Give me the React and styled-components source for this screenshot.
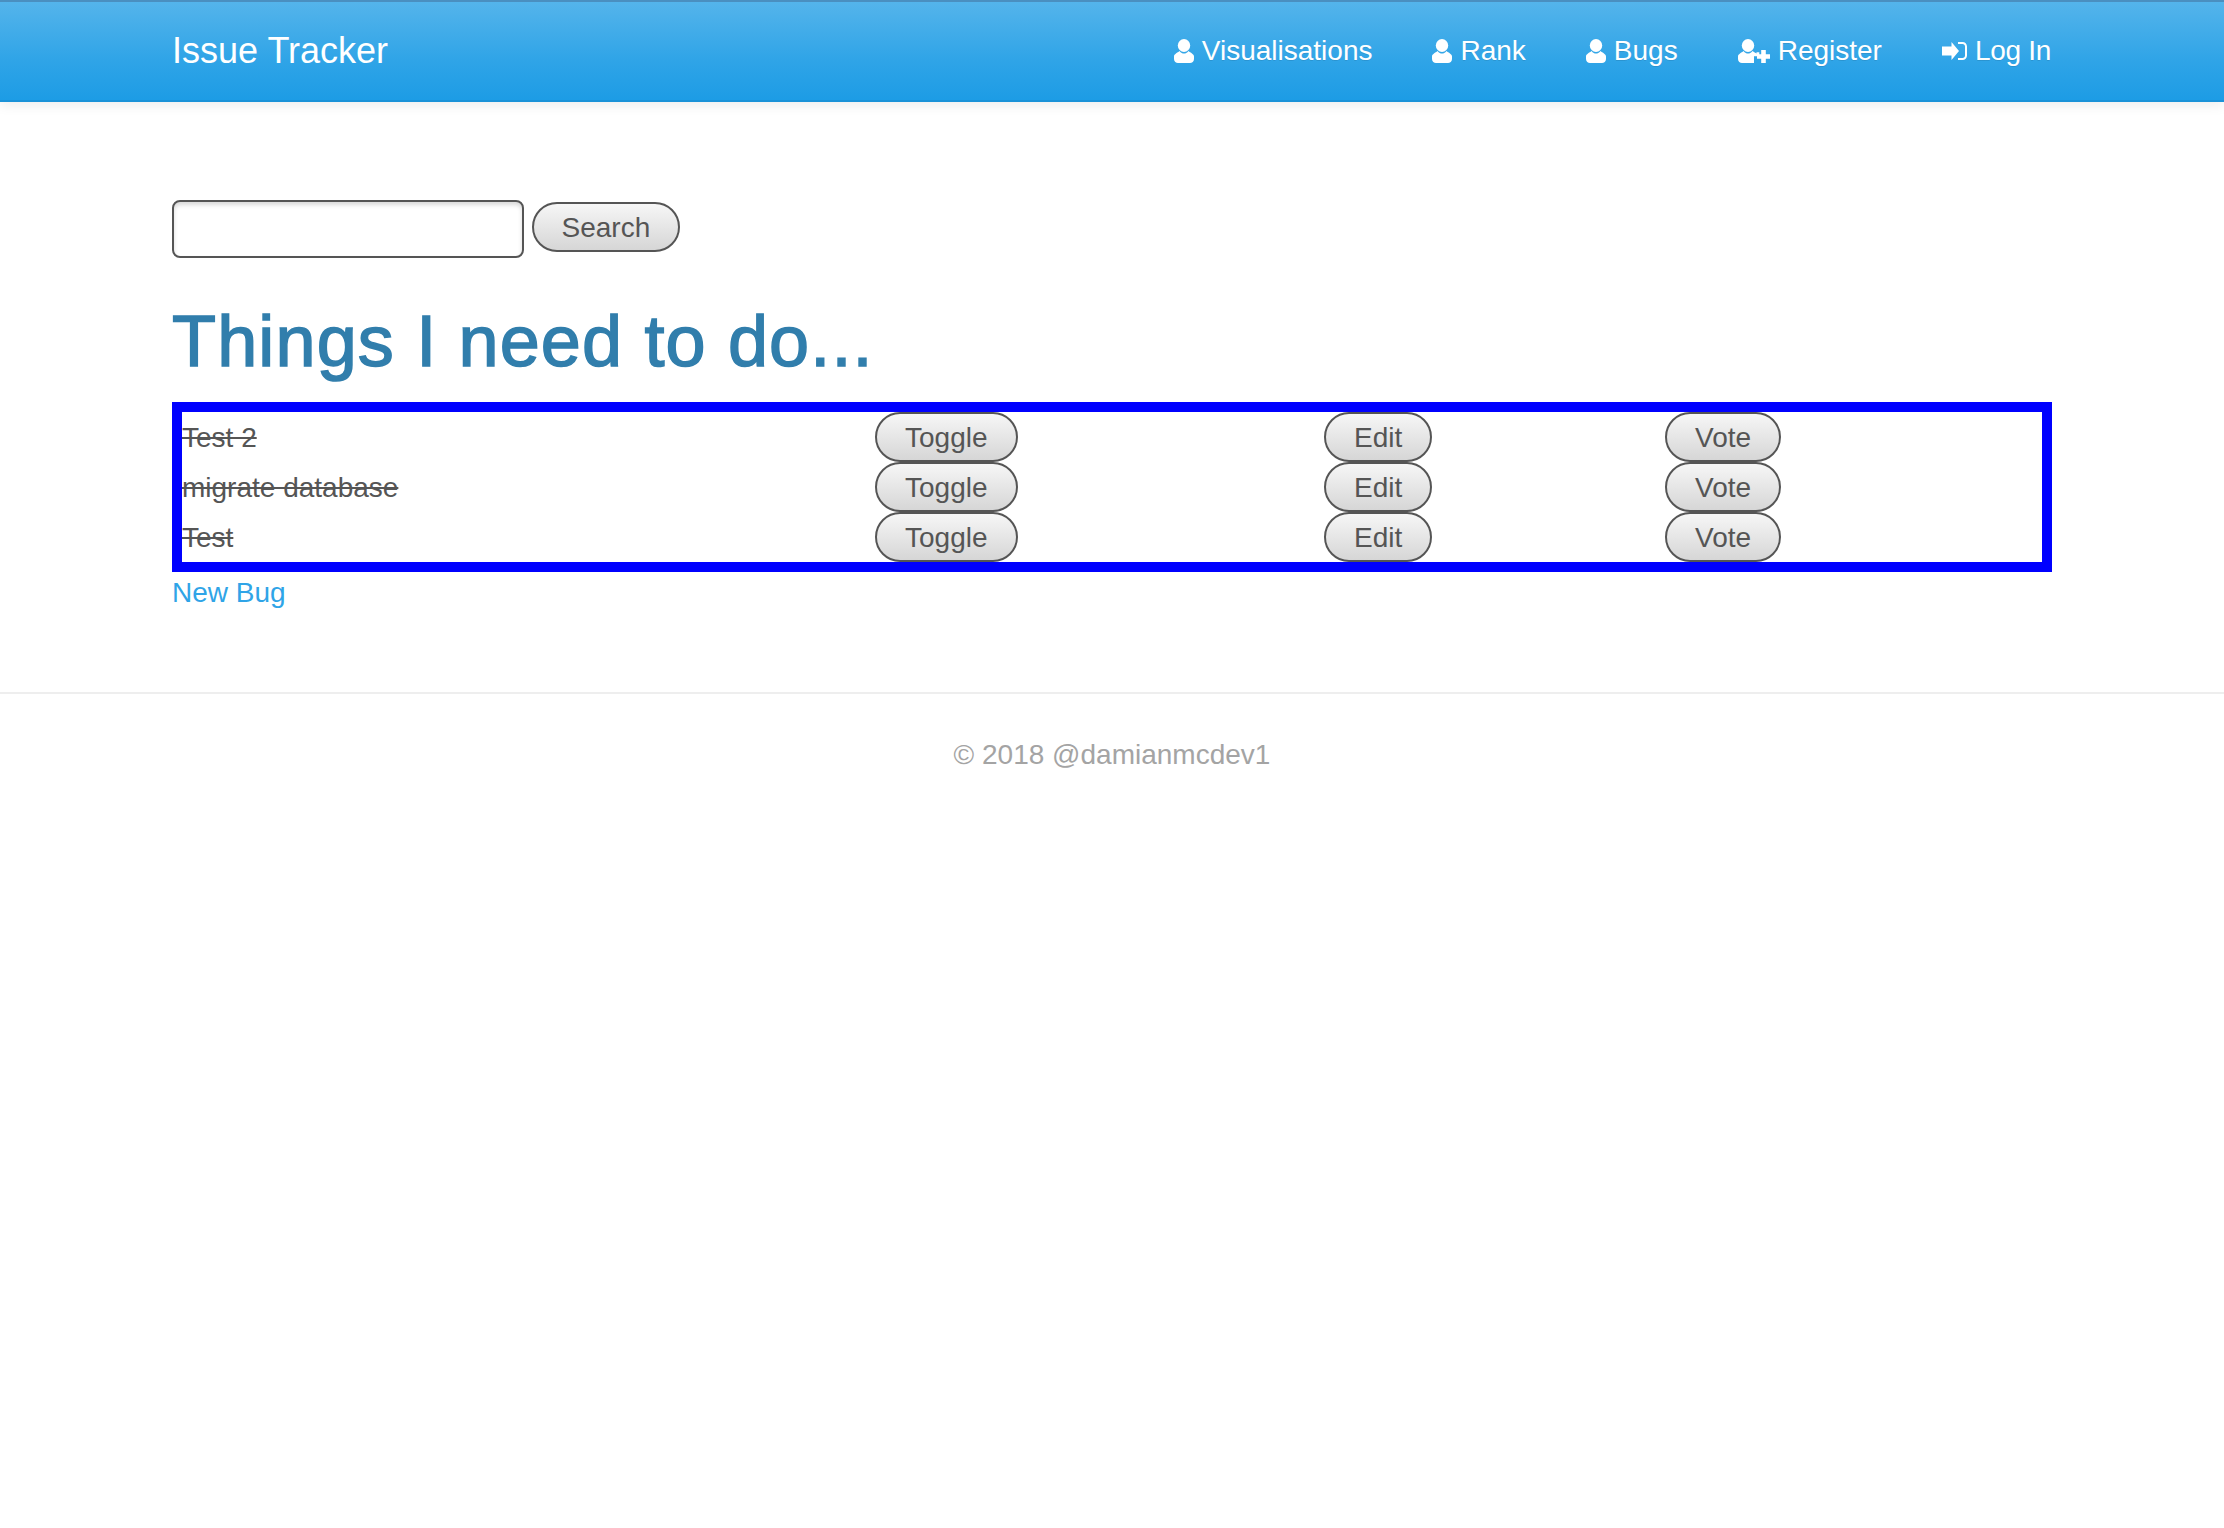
import styled, { createGlobalStyle } from "styled-components";

const bugs = ["Test 2", "migrate database", "Test"];

const GlobalStyle = createGlobalStyle`
  html, body {
    margin: 0;
    background: #fff;
    font-family: "Liberation Sans", Arial, sans-serif;
    font-size: 28px;
    line-height: 40px;
    color: #555;
  }
`;

const Navbar = styled.header`
  height: 102px;
  box-sizing: border-box;
  display: flex;
  align-items: center;
  justify-content: space-between;
  padding: 0 173px 0 172px;
  background: linear-gradient(#54b4eb, #2fa4e7 60%, #1d9ce5);
  border-top: 2px solid #4a8fc0;
  border-bottom: 2px solid #1a92d8;
  box-shadow: 0 3px 12px rgba(0, 0, 0, 0.08);
`;

const Brand = styled.a`
  font-size: 36px;
  color: #fff;
`;

const Nav = styled.nav`
  display: flex;
  gap: 60px;
`;

const NavLink = styled.a`
  display: flex;
  align-items: center;
  gap: 8px;
  color: #fff;
  text-shadow: 0 1px 0 rgba(0, 0, 0, 0.1);
  letter-spacing: ${(p) => (p.$tight ? "-0.3px" : "normal")};

  svg {
    display: block;
    fill: #fff;
  }
`;

const Main = styled.main`
  padding: 98px 172px 0;
`;

const SearchForm = styled.form`
  display: flex;
  align-items: flex-start;
  gap: 8px;
`;

const SearchInput = styled.input`
  width: 352px;
  height: 58px;
  box-sizing: border-box;
  border: 2px solid #555;
  border-radius: 8px;
  background: #fff;
  box-shadow: inset 0 3px 4px rgba(0, 0, 0, 0.15);
  outline: none;
`;

const Button = styled.button`
  height: 50px;
  box-sizing: border-box;
  padding: 2px 28px 0;
  border: 2px solid #555;
  border-radius: 25px;
  background: linear-gradient(#f6f6f6, #d6d6d6);
  color: #555;
  font: inherit;
  line-height: 1;
`;

const SearchButton = styled(Button)`
  margin-top: 2px;
  padding: 2px 27.5px 0;
`;

const Title = styled.h1`
  margin: 43px 0 20px;
  font-size: 72px;
  line-height: 81px;
  font-weight: 400;
  letter-spacing: 1.15px;
  color: #317eac;
  -webkit-text-stroke: 1.5px #317eac;
`;

const BugTable = styled.div`
  border: 10px solid #00f;
`;

const BugRow = styled.div`
  display: grid;
  grid-template-columns: 693px 449px 341px 1fr;
  align-items: center;
  height: 50px;
  justify-items: start;
`;

const BugName = styled.span`
  padding-top: 2px;
  text-decoration: line-through;
`;

const NewBug = styled.a`
  display: block;
  padding-top: 1px;
  color: #2fa4e7;
`;

const Footer = styled.footer`
  margin-top: 79px;
  padding-top: 41px;
  border-top: 2px solid #eee;
  text-align: center;
  color: #a4a4a4;
`;

const UserIcon = () => (
  <svg width="20" height="24" viewBox="0 0 20 24">
    <ellipse cx="10" cy="6.5" rx="6.2" ry="6.5" />
    <path d="M0 20V17.5C0 15 3.5 13.8 5.5 12 7 14 8.5 14.5 10 14.5S13 14 14.5 12C16.5 13.8 20 15 20 17.5V20C20 22.5 18 24 16 24H4C2 24 0 22.5 0 20Z" />
  </svg>
);

const RegisterIcon = () => (
  <svg width="32" height="24" viewBox="0 0 32 24">
    <ellipse cx="10" cy="6.5" rx="6.2" ry="6.5" />
    <path d="M0 20V17.5C0 15 3.5 13.8 5.5 12 7 14 8.5 14.5 10 14.5S13 14 14.5 12C15.5 13 17 13.8 18.5 14.5V13.2H21.3V17.3H16V24H4C2 24 0 22.5 0 20Z" />
    <path d="M23.2 11H27.8V15.2H32V19.8H27.8V24H23.2V19.8H19V15.2H23.2Z" />
  </svg>
);

const LoginIcon = () => (
  <svg width="25" height="18" viewBox="0 0 25 18">
    <path d="M0 4.5H9.5V0L17 9 9.5 18V13.5H0Z" />
    <path d="M16 0H20.5C23 0 25 2 25 4.5V13.5C25 16 23 18 20.5 18H16V16H20.5C22 16 23 15 23 13.5V4.5C23 3 22 2 20.5 2H16Z" />
  </svg>
);

export default function App() {
  return (
    <>
      <GlobalStyle />
      <Navbar>
        <Brand>Issue Tracker</Brand>
        <Nav>
          <NavLink><UserIcon />Visualisations</NavLink>
          <NavLink><UserIcon />Rank</NavLink>
          <NavLink><UserIcon />Bugs</NavLink>
          <NavLink><RegisterIcon />Register</NavLink>
          <NavLink $tight><LoginIcon />Log In</NavLink>
        </Nav>
      </Navbar>
      <Main>
        <SearchForm onSubmit={(e) => e.preventDefault()}>
          <SearchInput type="text" />
          <SearchButton>Search</SearchButton>
        </SearchForm>
        <Title>Things I need to do...</Title>
        <BugTable>
          {bugs.map((bug) => (
            <BugRow key={bug}>
              <BugName>{bug}</BugName>
              <Button>Toggle</Button>
              <Button>Edit</Button>
              <Button>Vote</Button>
            </BugRow>
          ))}
        </BugTable>
        <NewBug>New Bug</NewBug>
      </Main>
      <Footer>© 2018 @damianmcdev1</Footer>
    </>
  );
}
